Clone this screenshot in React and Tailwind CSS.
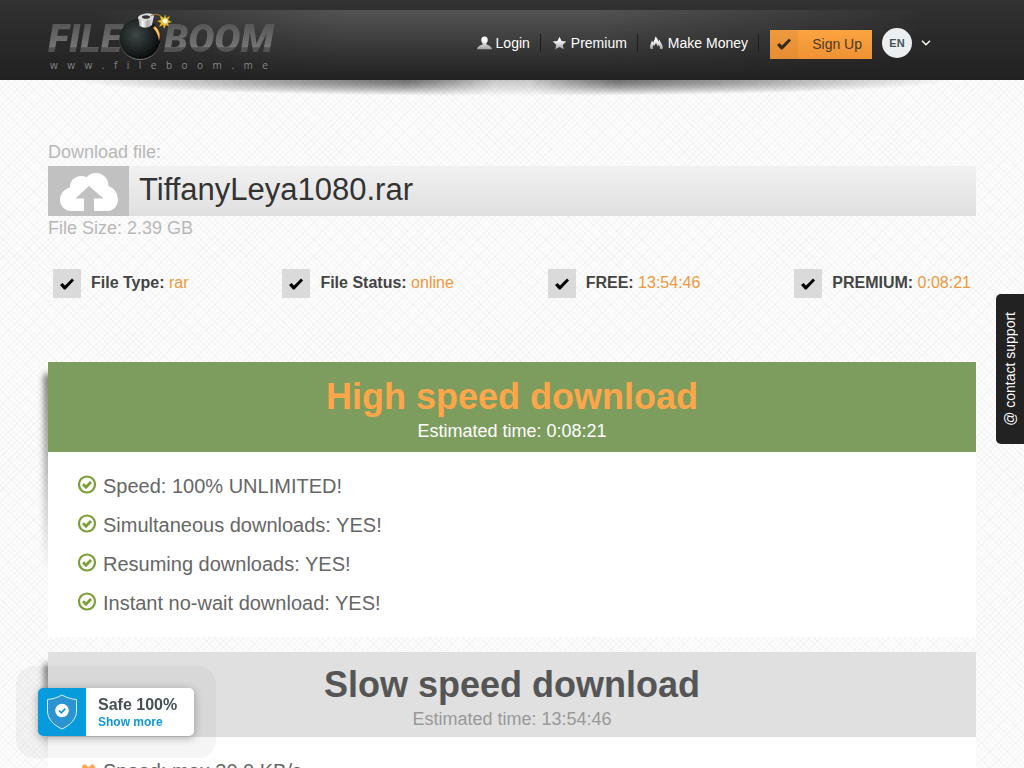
import React from "react";

const speedPerks = [
  "Speed: 100% UNLIMITED!",
  "Simultaneous downloads: YES!",
  "Resuming downloads: YES!",
  "Instant no-wait download: YES!",
];

const facts = [
  { label: "File Type:", value: "rar" },
  { label: "File Status:", value: "online" },
  { label: "FREE:", value: "13:54:46" },
  { label: "PREMIUM:", value: "0:08:21" },
];

function Bomb() {
  return (
    <svg viewBox="0 0 54 52" className="h-[52px] w-[54px] shrink-0" aria-hidden="true">
      <defs>
        <radialGradient id="ball" cx="0.4" cy="0.4" r="0.65">
          <stop offset="0" stopColor="#3d4746" />
          <stop offset="0.6" stopColor="#1c2222" />
          <stop offset="1" stopColor="#060707" />
        </radialGradient>
        <linearGradient id="cap" x1="0" x2="1">
          <stop offset="0" stopColor="#8b8b8b" />
          <stop offset="0.3" stopColor="#fafafa" />
          <stop offset="0.6" stopColor="#a9a9a9" />
          <stop offset="1" stopColor="#ededed" />
        </linearGradient>
        <linearGradient id="rim" x1="0" y1="0" x2="0" y2="1">
          <stop offset="0.4" stopColor="#555" stopOpacity="0" />
          <stop offset="1" stopColor="#777" />
        </linearGradient>
      </defs>
      <circle cx="22" cy="27" r="20.500" fill="url(#ball)" stroke="url(#rim)" />
      <path d="M37 14q7 6 4 15q-1-8-6-13z" fill="#f29a2b" />
      <path d="M37.500 15q4 5 3 10q-1-6-4-9z" fill="#ffd98a" />
      <path d="M20 5l1.500 9q7 4 12.500-1l2-10z" fill="url(#cap)" />
      <ellipse cx="28" cy="5" rx="8" ry="3.500" transform="rotate(-8 28 5)" fill="#ddd" />
      <ellipse cx="28" cy="5" rx="4" ry="1.800" fill="#333" />
      <path d="M33 4q6-4 12 2" fill="none" stroke="#9b7040" strokeWidth="1.300" />
      <path d="M47 2l1 4 4-2-2 4 4 2-4 1 2 4-4-2-2 4-1-4-4 2 2-4-4-2 4-1-1-4 4 2z" fill="#e9b92a" />
      <circle cx="47" cy="9" r="2.500" fill="#fffde0" />
    </svg>
  );
}

function Logo() {
  const word =
    "bg-linear-to-b from-[#555] from-20% via-[#757575] via-65% to-[#525252] to-66% bg-clip-text pr-1 font-['Roboto',sans-serif] text-[39px] leading-[54px] font-black italic text-transparent";
  return (
    <a href="#home" aria-label="FileBoom" className="flex w-[230px] shrink-0 flex-col">
      <span className="flex h-12 items-start">
        <span className={word}>FILE</span>
        <span className="-mx-2 flex">
          <Bomb />
        </span>
        <span className={word}>BOOM</span>
      </span>
      <span className="flex justify-between pr-[10px] pl-[2px] font-['Open_Sans',sans-serif] text-[10px] leading-[10px] text-[#858585]">
        {"www.fileboom.me".split("").map((c, i) => (
          <span key={i}>{c}</span>
        ))}
      </span>
    </a>
  );
}

function Check({ className }) {
  return (
    <svg viewBox="0 0 14 12" className={className} aria-hidden="true">
      <path d="M0 7l2.500-2 2.500 2.500L12 .5 14 2.500 5.500 11.500H4z" fill="currentColor" />
    </svg>
  );
}

function NavLink({ icon, children }) {
  return (
    <li className="flex items-center border-r border-[#1c1c1c] pr-[10px] pl-[11px]">
      <a href="#nav" className="flex items-center gap-1 text-[14px] leading-[18px] text-white">
        <svg viewBox="0 0 15 14" className="h-[14px] w-[15px]" aria-hidden="true">
          <defs>
            <linearGradient id="navIcon" x1="0" y1="0" x2="0" y2="14" gradientUnits="userSpaceOnUse">
              <stop offset="0.3" stopColor="#fff" />
              <stop offset="1" stopColor="#999" />
            </linearGradient>
          </defs>
          <path d={icon} fill="url(#navIcon)" />
        </svg>
        {children}
      </a>
    </li>
  );
}

const personIcon =
  "M7.500.500C9.800.500 10.900 2 10.700 4.200c-.1 1.500-.7 2.500-1.300 3.200v1c2 .8 5.300 1.700 5.600 4.900H0c.3-3.200 3.600-4.100 5.600-4.900v-1C5 6.700 4.400 5.700 4.300 4.200 4.100 2 5.200.500 7.500.500z";
const starIcon = "M7.500.800l2.100 4.200 4.700.6-3.500 3.200.9 4.500-4.200-2.200-4.200 2.200.9-4.500L.7 5.600l4.700-.6z";
const flameIcon =
  "M1.500 13C.5 9 2 7.500 3 4.500l1.200 2C5 4.500 6.300 3 6.300.500 8 1.800 9 3.500 9.200 5.500l1.300-2c.3 3 4.500 5.500 3 9.500h-2.700c.5-2-.3-3-1-4L8.700 10.500 7 7 5.300 10 4.500 9C3.800 10.500 3.700 11.800 4 13z";

function Header() {
  return (
    <header className="relative z-10 bg-linear-to-b from-[#323232] to-[#212121]">
      <div className="absolute inset-x-[9%] top-[10px] bottom-0 bg-linear-to-b from-[#ffffff2c] to-transparent [mask-image:linear-gradient(to_right,transparent,black_30%,black_60%,transparent)]" />
      <div className="relative flex h-20 items-start justify-between pr-[93px] pl-12">
        <div className="pt-3">
          <Logo />
        </div>
        <nav className="flex items-center pt-7" aria-label="Main">
          <ul className="flex items-center pb-[2px]">
            <NavLink icon={personIcon}>Login</NavLink>
            <NavLink icon={starIcon}>Premium</NavLink>
            <NavLink icon={flameIcon}>Make Money</NavLink>
          </ul>
          <a
            href="#signup"
            className="ml-[11px] flex h-[29px] w-[102px] items-stretch bg-linear-to-b from-[#fba440] to-[#ef9233] text-[14px] text-[#4a3a26]"
          >
            <span className="flex w-7 items-center justify-center bg-linear-to-b from-[#ee9a3e] to-[#e68c33]">
              <Check className="h-3 w-[14px] text-[#33291c]" />
            </span>
            <span className="flex flex-1 items-center justify-end pr-[10px]">Sign Up</span>
          </a>
          <button
            type="button"
            aria-label="Language: EN"
            className="ml-[10px] flex items-center gap-[9px] pb-[2px] text-white"
          >
            <span className="flex size-[30px] items-center justify-center rounded-full bg-[#eceff1] text-[11px] font-bold text-[#455358]">
              EN
            </span>
            <svg viewBox="0 0 10 6" className="h-[6px] w-[10px]" aria-hidden="true">
              <path d="M1 .8l4 4 4-4" fill="none" stroke="#fff" strokeWidth="1.400" />
            </svg>
          </button>
        </nav>
      </div>
      <div className="absolute inset-x-[7%] top-full h-4 bg-[radial-gradient(ellipse_50%_100%_at_50%_0,#000000b0,#00000060_50%,transparent)] [mask-image:linear-gradient(to_right,black_38%,#0000004d_48%,#0000004d_52%,black_62%)]" />
    </header>
  );
}

function Plan({ title, time, banner, heading, sub, children }) {
  return (
    <section className="relative mb-[15px]">
      <div className="absolute top-3 bottom-10 -left-1 w-2 bg-linear-to-b from-[#00000090] to-transparent to-90% blur-[3px]" />
      <div className="relative bg-white">
        <div className={"text-center " + banner}>
          <h2 className={"text-[36px] leading-10 font-bold " + heading}>{title}</h2>
          <p className={"text-[18px] leading-7 " + sub}>Estimated time: {time}</p>
        </div>
        <ul className="px-[30px] pt-[15px] pb-[14px] text-[20px] text-[#666]">{children}</ul>
      </div>
    </section>
  );
}

export default function App() {
  return (
    <div className="min-h-screen overflow-x-hidden bg-[#fdfdfd] bg-[repeating-linear-gradient(45deg,#00000007_0_1px,transparent_1px_4px),repeating-linear-gradient(-45deg,#00000007_0_1px,transparent_1px_4px)] font-['Liberation_Sans',Arial,sans-serif]">
      <Header />
      <main className="px-12 pt-[60px]">
        <p className="pb-[2px] text-[18px] leading-6 text-[#b8b8b8]">Download file:</p>
        <div className="flex h-[50px] items-stretch bg-linear-to-b from-[#f1f1f1] to-[#e0e0e0]">
          <div className="flex w-[81px] items-end justify-center bg-[#c1c1c1] pb-[5px]">
            <svg viewBox="0 0 58 38" className="h-[38px] w-[58px]" aria-hidden="true">
              <path
                d="M10 38C4 37.500 0 32 0 27c0-6 4-11 10-12.500C9.500 8 15 3 21 3q3 0 5.500 1.200C29 1.500 32 0 36 0c7 0 12.500 5.500 12.500 13C54 15 58 20.500 58 26.500 58 33 53 38 48 38H34V25.500h9.500L29 13 15.500 25.500H24V38z"
                fill="#fff"
              />
            </svg>
          </div>
          <h1 className="pl-[10px] text-[31px] leading-[48px] text-[#333]">TiffanyLeya1080.rar</h1>
        </div>
        <p className="text-[18px] leading-6 text-[#b8b8b8]">File Size: 2.39 GB</p>

        <ul className="mt-[29px] flex justify-between px-[5px] text-[16px]">
          {facts.map((f) => (
            <li key={f.label} className="flex items-start gap-[10px]">
              <span className="flex h-[29px] w-7 items-center justify-center bg-[#dadada]">
                <Check className="h-3 w-[14px] text-black" />
              </span>
              <span className="leading-7 text-[#f0983a]">
                <b className="text-[#444]">{f.label}</b> {f.value}
              </span>
            </li>
          ))}
        </ul>

        <div className="mt-16">
          <Plan
            title="High speed download"
            time="0:08:21"
            banner="bg-[#7c9d5e] pt-[15px] pb-[7px]"
            heading="text-[#ffa64a]"
            sub="text-white"
          >
            {speedPerks.map((perk) => (
              <li key={perk} className="flex items-center gap-[6px] leading-[39px]">
                <svg viewBox="0 0 19 19" className="mb-1 size-[19px]" aria-hidden="true">
                  <circle cx="9" cy="9.500" r="8" fill="none" stroke="#7a9f35" strokeWidth="2.200" />
                  <path d="M5 9.200l3 3L13 7" fill="none" stroke="#7a9f35" strokeWidth="2.800" />
                </svg>
                {perk}
              </li>
            ))}
          </Plan>
          <Plan
            title="Slow speed download"
            time="13:54:46"
            banner="bg-[#e0e0e0] pt-[13px] pb-1"
            heading="text-[#555]"
            sub="text-[#999]"
          >
            <li className="flex items-center gap-[6px] leading-[39px]">
              <svg viewBox="0 0 19 19" className="mb-1 size-[19px]" aria-hidden="true">
                <path d="M6.500 7l8 8M14.500 7l-8 8" stroke="#ffa64a" strokeWidth="5" strokeLinecap="round" />
              </svg>
              Speed: max 30.0 KB/s
            </li>
          </Plan>
        </div>
      </main>

      <button
        type="button"
        className="fixed top-[294px] right-0 z-20 flex h-[150px] w-7 items-center justify-center rounded-l-[5px] bg-[#222] text-[14px] text-white"
      >
        <span className="rotate-180 [writing-mode:vertical-rl]">@ contact support</span>
      </button>

      <aside className="fixed bottom-[10px] left-4 z-20 rounded-[18px] bg-[#5a5a6410] p-[22px]">
        <div className="flex h-12 w-[156px] overflow-hidden rounded-[5px] bg-white shadow-[0_2px_8px_#00000050]">
          <div className="flex w-12 items-center justify-center bg-[#069bdc]">
            <svg viewBox="0 0 32 36" className="h-9 w-8" aria-hidden="true">
              <path
                d="M16 1c4.500 2.600 9 4 14.500 4.500V17c0 8-6 14-14.500 18C7.500 31 1.500 25 1.500 17V5.500C7 5 11.500 3.600 16 1z"
                fill="#2a93d0"
                stroke="#d5f1ff"
              />
              <circle cx="16" cy="16.500" r="6.800" fill="#fff" />
              <path d="M13 16.500l2.300 2.300 4-4.200" fill="none" stroke="#108fcd" strokeWidth="1.600" />
            </svg>
          </div>
          <div className="flex flex-col justify-center pt-[2px] pl-3 font-bold">
            <span className="text-[16px] leading-[18px] text-[#455055]">Safe 100%</span>
            <a href="#safety" className="text-[12px] leading-4 text-[#1097db]">
              Show more
            </a>
          </div>
        </div>
      </aside>
    </div>
  );
}
